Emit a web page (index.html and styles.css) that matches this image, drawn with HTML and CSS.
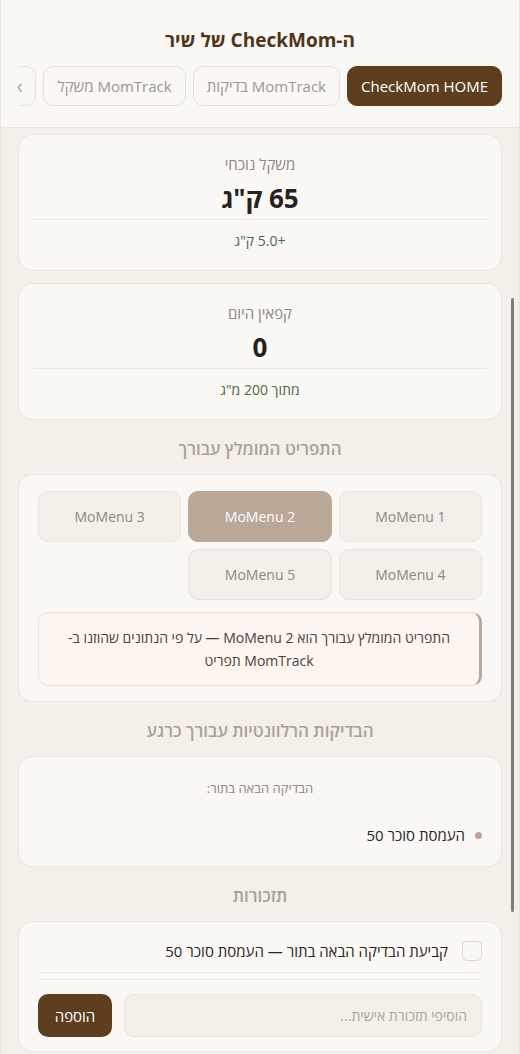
FILE: index.html
```html
<!DOCTYPE html>
<html lang="he" dir="rtl">
<head>
    <meta charset="UTF-8">
    <meta name="viewport" content="width=device-width, initial-scale=1.0">
    <title>CheckMom</title>
    <link rel="stylesheet" href="styles.css">
</head>
<body>
    <div class="app">
        <header class="top">
            <h1 class="title">ה-CheckMom של שיר</h1>
            <nav class="tabs">
                <button class="tab active">CheckMom HOME</button>
                <button class="tab">MomTrack בדיקות</button>
                <button class="tab">MomTrack משקל</button>
                <button class="tab">MomTrack תפריט</button>
            </nav>
        </header>

        <main class="content">
            <section class="card stat">
                <div class="stat-label">משקל נוכחי</div>
                <div class="stat-value">65 ק"ג</div>
                <div class="stat-sub">+5.0 ק"ג</div>
            </section>

            <section class="card stat">
                <div class="stat-label">קפאין היום</div>
                <div class="stat-value">0</div>
                <div class="stat-sub">מתוך 200 מ"ג</div>
            </section>

            <h2 class="section-title">התפריט המומלץ עבורך</h2>
            <section class="card menus">
                <div class="menu-grid">
                    <button class="menu-btn">MoMenu 1</button>
                    <button class="menu-btn selected">MoMenu 2</button>
                    <button class="menu-btn">MoMenu 3</button>
                    <button class="menu-btn">MoMenu 4</button>
                    <button class="menu-btn">MoMenu 5</button>
                </div>
                <div class="note">התפריט המומלץ עבורך הוא MoMenu 2 — על פי הנתונים שהוזנו ב-MomTrack תפריט</div>
            </section>

            <h2 class="section-title">הבדיקות הרלוונטיות עבורך כרגע</h2>
            <section class="card checks">
                <div class="checks-label">הבדיקה הבאה בתור:</div>
                <ul class="check-list">
                    <li>העמסת סוכר 50</li>
                </ul>
            </section>

            <h2 class="section-title">תזכורות</h2>
            <section class="card reminders">
                <label class="reminder">
                    <span class="box"></span>
                    <span>קביעת הבדיקה הבאה בתור — העמסת סוכר 50</span>
                </label>
                <form class="add-form" onsubmit="return false">
                    <input type="text" class="add-input" placeholder="הוסיפי תזכורת אישית...">
                    <button class="add-btn">הוספה</button>
                </form>
            </section>
        </main>

        <div class="scroll-thumb"></div>
    </div>
</body>
</html>
```

FILE: styles.css
```css
* { box-sizing: border-box; }
body { margin: 0; height: 1054px; overflow: hidden; background: #f4f0e9; font-family: "Open Sans", "Liberation Sans", "DejaVu Sans", sans-serif; color: #2c2723; }
button, input { font-family: inherit; }

.app { position: relative; height: 1054px; display: flex; flex-direction: column; overflow: hidden; border-left: 1px solid #e9e7e3; border-right: 1px solid #dcebd8; }

/* header */
.top { background: #faf8f5; border-bottom: 1px solid #ebe5dc; padding: 28px 0 21px; flex-shrink: 0; }
.title { margin: 0 0 14px; text-align: center; font-size: 19px; line-height: 24px; font-weight: 700; color: #4f331a; }
.tabs { display: flex; gap: 7px; margin: 0 17px; overflow: hidden; }
.tab { flex-shrink: 0; height: 40px; padding: 0 13px; border: 1px solid #e7e1d8; border-radius: 10px; background: #faf8f5; color: #9c968e; font-size: 15px; white-space: nowrap; }
.tab.active { background: #5d3e1f; border-color: #5d3e1f; color: #fff; font-weight: 500; }

/* main */
.content { flex: 1; display: flex; flex-direction: column; gap: 12px; padding: 6px 17px 0; }
.card { background: #faf8f5; border: 1px solid #ebe5dc; border-radius: 14px; }
.section-title { margin: 0; padding: 5px 0 1px; height: 30px; text-align: center; font-size: 17px; line-height: 24px; font-weight: 600; color: #a9a199; }

.stat { padding: 18px 14px 19px; text-align: center; }
.stat-label { font-size: 15px; line-height: 22px; color: #8c8780; }
.stat-value { margin-top: 6px; font-size: 26px; line-height: 34px; font-weight: 700; color: #27221e; border-bottom: 1px solid #ece7df; padding-bottom: 4px; }
.stat-sub { padding-top: 11px; font-size: 14px; line-height: 20px; color: #476a42; }

.menus { padding: 16px 19px 15px; }
.menu-grid { display: grid; grid-template-columns: repeat(3, 1fr); gap: 7px; }
.menu-btn { height: 51px; border: 1px solid #e9e3da; border-radius: 10px; background: #f4f0e9; color: #8c8780; font-size: 14px; }
.menu-btn.selected { background: #b9a898; border-color: #b9a898; color: #fff; }
.note { margin-top: 12px; padding: 13px 24px; background: #fdf5f0; border: 1px solid #f0dfd6; border-right: 3px solid #b9a898; border-radius: 10px; text-align: center; font-size: 14px; line-height: 23px; color: #48423d; }

.checks { padding: 21px 19px 19px; }
.checks-label { text-align: center; font-size: 13px; line-height: 20px; color: #8c8780; }
.check-list { list-style: none; margin: 25px 0 0; padding: 0; }
.check-list li { display: flex; align-items: center; gap: 10px; font-size: 15px; line-height: 24px; color: #2c2723; }
.check-list li::before { content: ""; width: 7px; height: 7px; border-radius: 50%; background: #b9a898; }

.reminders { padding: 19px 19px 14px; }
.reminder { display: flex; align-items: center; gap: 14px; padding-bottom: 11px; border-bottom: 1px solid #ece7df; font-size: 15px; line-height: 20px; color: #2c2723; }
.box { width: 20px; height: 20px; border: 1px solid #ddd5cb; border-radius: 5px; background: #faf8f5; flex-shrink: 0; }
.add-form { display: flex; gap: 12px; margin-top: 6px; padding-top: 14px; border-top: 1px solid #ece7df; }
.add-input { flex: 1; height: 43px; padding: 0 14px; border: 1px solid #e9e3da; border-radius: 10px; background: #f4f0e9; font-size: 14px; color: #2c2723; }
.add-input::placeholder { color: #aaa39b; }
.add-btn { width: 74px; height: 43px; border: none; border-radius: 10px; background: #5d3e1f; color: #fff; font-size: 15px; }

.scroll-thumb { position: absolute; right: 5px; top: 298px; width: 3px; height: 614px; border-radius: 2px; background: #7f7d7b; }
```
